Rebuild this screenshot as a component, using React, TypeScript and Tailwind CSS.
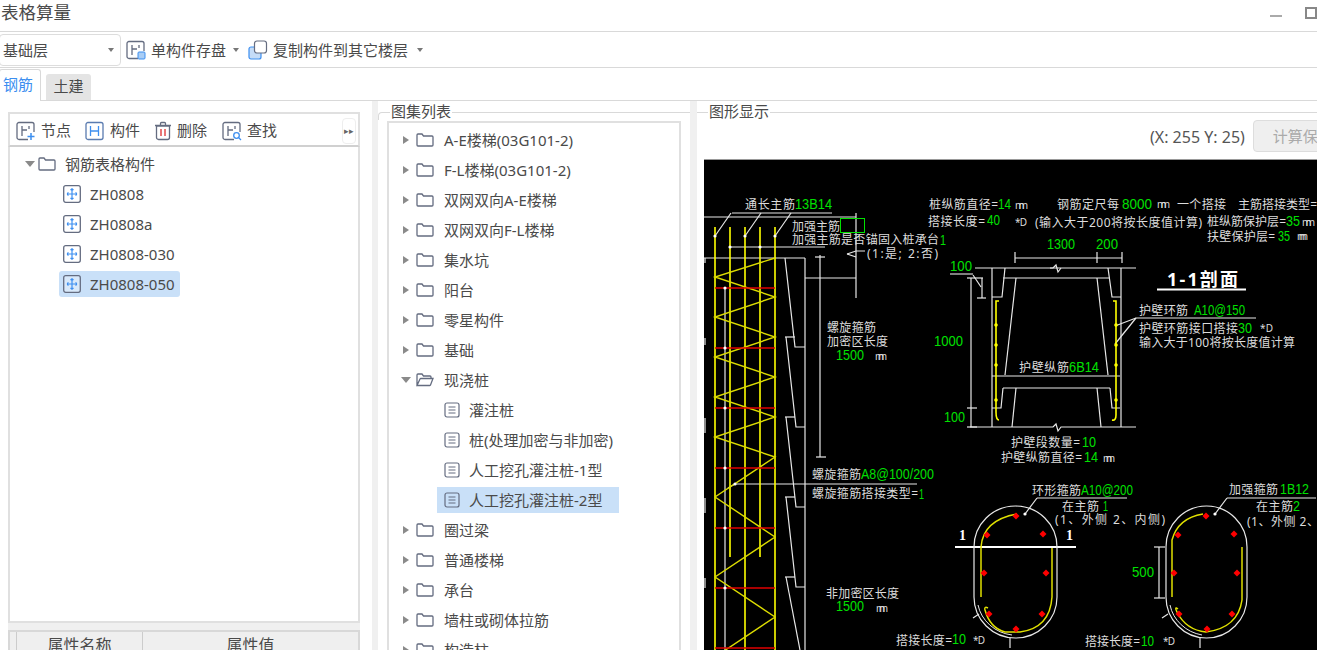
const CJK = "'Noto Sans', 'Noto Sans CJK SC', sans-serif"

const W = '#e8e8e8'
const G = '#00e000'
const Y = '#ffff00'

// x, y (middle), width, text
const whiteLabels: [number, number, number, string][] = [
  [745, 204, 50, '通长主筋'],
  [792, 226, 48, '加强主筋'],
  [792, 239, 147, '加强主筋是否锚固入桩承台'],
  [867, 253, 71, '(1:是; 2:否)'],
  [929, 204, 69, '桩纵筋直径='],
  [1015, 205, 13, 'mm'],
  [928, 221, 57, '搭接长度='],
  [1015, 222, 12, '*D'],
  [1035, 222, 167, '(输入大于200将按长度值计算)'],
  [1057, 204, 62, '钢筋定尺每'],
  [1157, 204, 13, 'mm'],
  [1177, 204, 49, '一个搭接'],
  [1238, 204, 79, '主筋搭接类型='],
  [1207, 221, 79, '桩纵筋保护层='],
  [1302, 222, 13, 'mm'],
  [1207, 236, 68, '扶壁保护层='],
  [1297, 236, 11, 'mm'],
  [827, 327, 49, '螺旋箍筋'],
  [827, 341, 61, '加密区长度'],
  [875, 356, 12, 'mm'],
  [1139, 310, 49, '护壁环筋'],
  [1139, 328, 99, '护壁环筋接口搭接'],
  [1260, 328, 13, '*D'],
  [1139, 342, 156, '输入大于100将按长度值计算'],
  [1019, 367, 50, '护壁纵筋'],
  [1011, 442, 69, '护壁段数量='],
  [1001, 457, 81, '护壁纵筋直径='],
  [1103, 458, 12, 'mm'],
  [812, 474, 49, '螺旋箍筋'],
  [812, 493, 106, '螺旋箍筋搭接类型='],
  [826, 593, 73, '非加密区长度'],
  [876, 608, 12, 'mm'],
  [896, 640, 56, '搭接长度='],
  [973, 640, 12, '*D'],
  [1032, 490, 49, '环形箍筋'],
  [1062, 506, 37, '在主筋'],
  [1055, 519, 110, '(1、外侧  2、内侧)'],
  [1229, 489, 49, '加强箍筋'],
  [1256, 506, 37, '在主筋'],
  [1247, 521, 72, '(1、外侧  2、'],
  [1085, 641, 55, '搭接长度='],
  [1163, 641, 12, '*D'],
]

const greenLabels: [number, number, number, string][] = [
  [795, 204, 37, '13B14'],
  [940, 240, 6, '1'],
  [998, 204, 13, '14'],
  [987, 220, 13, '40'],
  [1122, 204, 30, '8000'],
  [1286, 221, 14, '35'],
  [1278, 236, 12, '35'],
  [950, 266, 22, '100'],
  [1047, 244, 28, '1300'],
  [1096, 244, 22, '200'],
  [934, 341, 29, '1000'],
  [836, 355, 28, '1500'],
  [1194, 310, 51, 'A10@150'],
  [1238, 328, 14, '30'],
  [1069, 367, 30, '6B14'],
  [944, 417, 21, '100'],
  [1082, 442, 14, '10'],
  [1084, 457, 14, '14'],
  [861, 474, 73, 'A8@100/200'],
  [919, 494, 5, '1'],
  [1081, 490, 52, 'A10@200'],
  [1103, 506, 5, '1'],
  [1280, 489, 29, '1B12'],
  [1293, 506, 7, '2'],
  [1132, 572, 22, '500'],
  [836, 606, 28, '1500'],
  [952, 639, 14, '10'],
  [1141, 641, 13, '10'],
]

const whiteLines = [
  'M704 217H856', 'M732 213H832', 'M731 213L715 236', 'M761 213L745 236', 'M791 213L775 236',
  'M730 247H825', 'M704 258H805', 'M805 258V650', 'M725 287V650',
  'M785 258L795 347H805', 'M785 337H795', 'M786 337L796 427H805', 'M785 417H795',
  'M786 417L796 507H805', 'M785 497H795', 'M786 497L796 587H805', 'M785 577H795', 'M786 577L800 650',
  'M820 255V457', 'M815 257H825', 'M816 457H826', 'M805 278H856', 'M856 213V298',
  'M847 254L856 251H865', 'M847 254L856 257',
  'M705 258V263', 'M705 338V345', 'M705 418V433', 'M705 498V513', 'M705 578V588',
  // section
  'M975 268H1136', 'M992 268V427', 'M1121 268V427', 'M1005 268L1002 297H992', 'M1108 268L1112 297H1121',
  'M1003 278H1110', 'M1016 278L1005 375', 'M1097 278L1108 375', 'M992 376H1120', 'M1003 388H1110',
  'M1016 388L1012 427', 'M1097 388L1101 427', 'M1110 388L1112 408H1120', 'M1003 388L1001 408H992',
  'M970 427H1053L1056 424L1058 431L1061 427H1136', 'M971 278V427', 'M967 278H983', 'M982 278V298', 'M977 298H986',
  'M973 275L981 287', 'M967 408H977', 'M967 427H977',
  'M1015 258H1122', 'M1015 252V263', 'M1097 252V263', 'M1122 252V263',
  'M1050 268L1053 268L1056 265L1058 272L1061 268',
  // leaders
  'M1136 318H1256', 'M1136 318L1115 326', 'M1136 318L1115 344',
  'M735 484H917', 'M735 484L728 488',
  'M1037 498H1127', 'M1037 498L1025 514', 'M1227 498H1316', 'M1227 498L1215 514',
  'M1159 547V598', 'M1154 547H1165', 'M1154 598H1165',
  'M1010 638V648', 'M1200 638V648', 'M973 618L979 614', 'M1162 618L1168 614',
]

const yellowLines = [
  'M715 227V650', 'M730 227V557', 'M745 227V650', 'M760 227V557', 'M775 227V650',
  'M996 305V412Q996 420 999 420', 'M996 305V301H999', 'M1116 305V415Q1116 421 1112 420', 'M1116 305V301H1113',
]

const zigzag =
  'M775 258L715 277L775 297L715 317L775 337L715 357L775 377L715 397L775 417L715 437L775 457L715 497L775 537L715 577L775 617L715 657'

const redLines = [288, 348, 408, 468, 528, 588, 648]

const redDots = [
  [987, 535], [984, 573], [989, 614], [1016, 516], [1043, 534], [1046, 573], [1042, 614], [1016, 629],
  [1206, 516], [1234, 534], [1237, 573], [1232, 614], [1207, 629], [1179, 614], [1174, 573], [1178, 535],
]

const whiteDots = [
  [715, 236], [745, 236], [775, 236], [730, 247], [760, 247], [725, 288], [725, 348], [725, 408], [725, 468],
  [725, 528], [725, 588], [735, 484], [1025, 514], [1215, 514],
]

const rebarDots = [
  [996, 325], [996, 345], [996, 365], [996, 400], [1116, 325], [1116, 345], [1116, 365], [1116, 400],
]

const Drawing = () => (
  <svg viewBox="704 160 613 490" className="block w-[613px] h-[490px] bg-black">
    {whiteLines.map((d) => (
      <path key={d} d={d} fill="none" stroke={W} strokeWidth={1.2} />
    ))}
    {yellowLines.map((d) => (
      <path key={d} d={d} fill="none" stroke={Y} strokeWidth={1.6} />
    ))}
    <path d={zigzag} fill="none" stroke="#dcdc00" strokeWidth={1.4} />
    {redLines.map((y) => (
      <path key={y} d={`M715 ${y}H775`} stroke="#e00000" strokeWidth={1.6} />
    ))}
    <rect x={840.5} y={218.5} width={24} height={14} fill="none" stroke="#00e000" />
    <path d="M955 547H1076" stroke="#fff" strokeWidth={2} />
    <path d="M950 274H973" stroke="#fff" strokeWidth={1} />
    {/* ovals */}
    <path d="M974 547A41.5 41 0 0 1 1057 547V597A41.5 41 0 0 1 974 597Z" fill="none" stroke={W} strokeWidth={1.2} />
    <path d="M978 605A40 38 0 0 0 1012 635" fill="none" stroke={W} />
    <path d="M1166 547A40.5 41 0 0 1 1247 547V597A40.5 41 0 0 1 1166 597Z" fill="none" stroke={W} strokeWidth={1.2} />
    <path d="M1170 605A40 38 0 0 0 1202 635" fill="none" stroke={W} />
    <path d="M981 597V547Q983 520 1017 514" fill="none" stroke="#e0e000" strokeWidth={1.5} />
    <path d="M1052 548V597Q1050 628 1020 632H1005Q990 628 985 610Q984 606 988 608" fill="none" stroke="#e0e000" strokeWidth={1.5} />
    <path d="M1172 597V540Q1178 518 1203 514" fill="none" stroke="#e0e000" strokeWidth={1.5} />
    <path d="M1242 547V600Q1238 628 1206 632Q1186 630 1177 612Q1174 606 1178 609" fill="none" stroke="#e0e000" strokeWidth={1.5} />
    {redDots.map(([x, y]) => (
      <path key={`${x}-${y}`} d={`M${x} ${y - 3.5}L${x + 3.5} ${y}L${x} ${y + 3.5}L${x - 3.5} ${y}Z`} fill="#ff0000" />
    ))}
    {whiteDots.map(([x, y]) => (
      <circle key={`${x}-${y}`} cx={x} cy={y} r={1.6} fill="#fff" />
    ))}
    {rebarDots.map(([x, y]) => (
      <circle key={`${x}-${y}`} cx={x} cy={y} r={1.8} fill={Y} />
    ))}
    {whiteLabels.map(([x, y, w, t]) => (
      <text
        key={`${x}-${y}-${t}`}
        x={x}
        y={y}
        textLength={w}
        lengthAdjust="spacing"
        dominantBaseline="central"
        fontSize={t === 'mm' || t === '*D' ? 10 : 12}
        fontFamily={CJK}
        fill="#dcdcdc"
      >
        {t}
      </text>
    ))}
    {greenLabels.map(([x, y, w, t]) => (
      <text
        key={`${x}-${y}-${t}`}
        x={x}
        y={y}
        textLength={w}
        lengthAdjust="spacingAndGlyphs"
        dominantBaseline="central"
        fontSize={14}
        fontFamily="'Liberation Sans', sans-serif"
        fill={G}
      >
        {t}
      </text>
    ))}
    <text x={1167} y={279} textLength={71} lengthAdjust="spacing" dominantBaseline="central" fontSize={18} fontWeight={700} fontFamily={CJK} fill="#fff">
      1-1剖面
    </text>
    <path d="M1157 289.5H1246" stroke="#fff" strokeWidth={2} />
    <text x={959} y={535} dominantBaseline="central" fontSize={14} fontWeight={700} fontFamily="'Liberation Serif', serif" fill="#fff">1</text>
    <text x={1066} y={535} dominantBaseline="central" fontSize={14} fontWeight={700} fontFamily="'Liberation Serif', serif" fill="#fff">1</text>
  </svg>
)

const stroke = '#646c80'

const FolderIcon = (props: { open?: boolean }) => (
  <svg width="20" height="18" viewBox="0 0 20 18" fill="none" stroke={stroke} strokeWidth="1.3">
    {props.open ? (
      <path d="M2 14V4a1 1 0 0 1 1-1h4l1.5 2H15a1 1 0 0 1 1 1v1.5M2 14.5 5 8a1 1 0 0 1 1-.5h12L15.500 14a1 1 0 0 1-1 .5Z" />
    ) : (
      <path d="M2 4a1 1 0 0 1 1-1h4l1.500 2H17a1 1 0 0 1 1 1v8a1 1 0 0 1-1 1H3a1 1 0 0 1-1-1Z" />
    )}
  </svg>
)

const DocIcon = () => (
  <svg width="16" height="16" viewBox="0 0 16 16" fill="none" stroke={stroke} strokeWidth="1.2">
    <rect x="1" y="1" width="14" height="14" rx="2" />
    <path d="M4.500 5h7M4.500 8h7M4.500 11h7" />
  </svg>
)

const PartIcon = () => (
  <svg width="18" height="18" viewBox="0 0 18 18" fill="none">
    <rect x="0.700" y="0.700" width="16.600" height="16.600" rx="2" stroke={stroke} strokeWidth="1.300" fill="#fff" fillOpacity="0.300" />
    <path d="M9 4v10M4.500 9h9M7.500 5 9 3.800 10.500 5M5.500 7.500c-1.500.5-1.500 2.500 0 3M12.500 7.500c1.500.5 1.500 2.500 0 3M7.500 13 9 14.200 10.500 13" stroke="#3d8ff0" strokeWidth="1.200" />
  </svg>
)

const BarIcon = (props: { kind: 'node' | 'part' | 'search' | 'save' }) => (
  <svg width="20" height="20" viewBox="0 0 20 20" fill="none">
    {props.kind === 'part' ? (
      <>
        <rect x="1" y="1.500" width="17" height="17" rx="2" stroke="#5a7bb0" strokeWidth="1.300" />
        <path d="M5.500 5v10M13.500 5v10M5.500 10h8" stroke="#3d8ff0" strokeWidth="1.300" />
      </>
    ) : (
      <>
        <path d="M12 18.500H3a2 2 0 0 1-2-2v-13a2 2 0 0 1 2-2h13a2 2 0 0 1 2 2V11" stroke={stroke} strokeWidth="1.300" />
        <path d="M6 5v10M13 5v3M6 9h5" stroke={stroke} strokeWidth="1.300" />
        {props.kind === 'node' && <path d="M15 12v7M11.500 15.500h7" stroke="#3d8ff0" strokeWidth="1.500" />}
        {props.kind === 'search' && (
          <>
            <circle cx="14.500" cy="14.500" r="2.800" stroke="#3d8ff0" strokeWidth="1.300" />
            <path d="m16.500 16.500 2.500 2.500" stroke="#3d8ff0" strokeWidth="1.300" />
          </>
        )}
        {props.kind === 'save' && <rect x="12" y="12" width="7" height="7" rx="1" fill="#a9cdf5" stroke="#3d8ff0" />}
      </>
    )}
  </svg>
)

const TrashIcon = () => (
  <svg width="18" height="20" viewBox="0 0 18 20" fill="none">
    <path d="M2.500 5h13v11.500a2 2 0 0 1-2 2h-9a2 2 0 0 1-2-2ZM1 4.500h16M6.500 4.500v-2a1 1 0 0 1 1-1h3a1 1 0 0 1 1 1v2" stroke={stroke} strokeWidth="1.300" />
    <path d="M7 8v7M11 8v7" stroke="#e34b4b" strokeWidth="1.500" />
  </svg>
)

const CopyIcon = () => (
  <svg width="20" height="20" viewBox="0 0 20 20" fill="none">
    <rect x="1" y="7" width="12" height="12" rx="2" fill="#c5dcf7" stroke="#3d8ff0" strokeWidth="1.200" />
    <rect x="6.500" y="1" width="12" height="12" rx="2.500" fill="#fff" stroke={stroke} strokeWidth="1.200" />
  </svg>
)

const Caret = (props: { className?: string }) => (
  <span className={`block shrink-0 w-0 h-0 border-x-[3px] border-x-transparent border-t-[4px] border-t-[#777] ${props.className ?? ''}`} />
)
const ArrowRight = () => <span className="block w-0 h-0 border-y-[4px] border-y-transparent border-l-[6px] border-l-[#8a8a8a]" />
const ArrowDown = () => <span className="block w-0 h-0 border-x-[5px] border-x-transparent border-t-[6px] border-t-[#8a8a8a]" />

const folders = [
  'A-E楼梯(03G101-2)',
  'F-L楼梯(03G101-2)',
  '双网双向A-E楼梯',
  '双网双向F-L楼梯',
  '集水坑',
  '阳台',
  '零星构件',
  '基础',
]
const piles = ['灌注桩', '桩(处理加密与非加密)', '人工挖孔灌注桩-1型', '人工挖孔灌注桩-2型']
const moreFolders = ['圈过梁', '普通楼梯', '承台', '墙柱或砌体拉筋', '构造柱']
const parts = ['ZH0808', 'ZH0808a', 'ZH0808-030', 'ZH0808-050']

const FolderRow = (props: { label: string; open?: boolean }) => (
  <div className="h-[30px] flex items-center shrink-0">
    <span className="w-[13px] ml-[10px] flex justify-center">{props.open ? <ArrowDown /> : <ArrowRight />}</span>
    <span className="ml-[3px]">
      <FolderIcon open={props.open} />
    </span>
    <span className="ml-[9px] whitespace-nowrap">{props.label}</span>
  </div>
)

const ToolItem = (props: { icon: React.ReactNode; label: string; width: string }) => (
  <div className={`flex items-center gap-[5px] ${props.width}`}>
    {props.icon}
    <span>{props.label}</span>
  </div>
)

export default function App() {
  return (
    <div
      className="w-[1317px] h-[650px] overflow-hidden bg-white flex flex-col text-[15px] text-[#4a4a4a]"
      style={{ fontFamily: CJK }}
    >
      <div className="h-[31px] shrink-0 flex items-center justify-between pl-[1px] pb-[6px]">
        <span className="text-[17.500px] leading-none">表格算量</span>
        <div className="flex items-center gap-[23px]">
          <span className="w-[12px] h-[2px] bg-[#aaaaaa] mt-[6px]" />
          <span className="w-[12px] h-[12px] border-2 border-[#888888]" />
        </div>
      </div>

      <div className="h-[37px] shrink-0 border-y border-[#d9d9d9] flex items-center pt-[1px]">
        <div className="w-[122px] h-[32px] ml-[-1px] border border-[#dddddd] rounded-[4px] flex items-center justify-between pl-[3px] pr-[6px]">
          <span>基础层</span>
          <Caret />
        </div>
        <span className="ml-[5px]">
          <BarIcon kind="save" />
        </span>
        <span className="ml-[5px]">单构件存盘</span>
        <Caret className="ml-[7px]" />
        <span className="ml-[9px]">
          <CopyIcon />
        </span>
        <span className="ml-[5px]">复制构件到其它楼层</span>
        <Caret className="ml-[9px]" />
      </div>

      <div className="h-[33px] shrink-0 border-b border-[#d9d9d9] flex items-end">
        <div className="w-[42px] h-[32px] border border-b-0 border-[#d9d9d9] rounded-t-[3px] bg-white text-[#3b8ef0] flex items-center justify-center mb-[-1px] ml-[-1px] pb-[2px] pr-[4px]">
          钢筋
        </div>
        <div className="w-[45px] h-[26px] ml-[5px] bg-[#e4e4e4] rounded-t-[3px] flex items-center justify-center pb-[1px]">土建</div>
      </div>

      <div className="flex-1 min-h-0 flex">
        <div className="w-[372px] shrink-0 pl-[8px] pr-[12px] pt-[11px] flex flex-col">
          <div className="h-[35px] shrink-0 border-2 border-[#e0e0e0] border-b-[#d0d0d0] flex items-center pl-[6px] pr-[2px] pt-[2px]">
            <ToolItem icon={<BarIcon kind="node" />} label="节点" width="w-[69px]" />
            <ToolItem icon={<BarIcon kind="part" />} label="构件" width="w-[69px]" />
            <ToolItem icon={<TrashIcon />} label="删除" width="w-[68px]" />
            <ToolItem icon={<BarIcon kind="search" />} label="查找" width="w-[120px]" />
            <div className="h-[26px] w-[14px] border border-[#eeeeee] rounded-[4px] text-[9px] text-[#666] flex items-center justify-center">▸▸</div>
          </div>
          <div className="h-[476px] shrink-0 border-2 border-t-0 border-[#e0e0e0]">
            <div className="h-[30px] mt-[2px] flex items-center">
              <span className="ml-[14px] w-[12px] flex justify-center">
                <ArrowDown />
              </span>
              <span className="ml-[1px]">
                <FolderIcon />
              </span>
              <span className="ml-[8px]">钢筋表格构件</span>
            </div>
            {parts.map((p, i) => (
              <div key={p} className="h-[30px] flex items-center">
                <div
                  className={`h-[26px] ml-[49px] pl-[4px] pr-[5px] rounded-[3px] flex items-center gap-[9px] ${i === 3 ? 'bg-[#c9e0f8]' : ''}`}
                >
                  <PartIcon />
                  <span>{p}</span>
                </div>
              </div>
            ))}
          </div>
          <div className="h-[7px] shrink-0 bg-[#f0f0f0]" />
          <div className="h-[30px] shrink-0 flex bg-[#efefef] border-t-2 border-x-2 border-[#d8d8d8] text-[16px] leading-[26px]">
            <div className="w-[7px] border-r border-[#cccccc]" />
            <div className="w-[126px] border-r border-[#cccccc] text-center">属性名称</div>
            <div className="flex-1 text-center">属性值</div>
          </div>
        </div>

        <div className="w-[6px] shrink-0 bg-[#f0f0f0]" />

        <div className="w-[312px] shrink-0 relative pt-[11px] pl-[9px] pr-[9px]">
          <div className="absolute left-0 right-0 top-[11px] h-[8px] border-t border-l border-[#d9d9d9] rounded-tl-[4px]" />
          <span className="absolute left-[12px] top-[1px] bg-white px-[1px] leading-[18px]">图集列表</span>
          <div className="h-[600px] mt-[9px] border-x-2 border-t-2 border-[#e0e0e0] pt-[2px] overflow-hidden">
            {folders.map((f) => (
              <FolderRow key={f} label={f} />
            ))}
            <FolderRow label="现浇桩" open />
            {piles.map((p, i) => (
              <div key={p} className="h-[30px] flex items-center">
                <div className={`h-[26px] ml-[48px] w-[182px] pl-[7px] flex items-center gap-[9px] ${i === 3 ? 'bg-[#c9e0f8]' : ''}`}>
                  <DocIcon />
                  <span className="whitespace-nowrap">{p}</span>
                </div>
              </div>
            ))}
            {moreFolders.map((f) => (
              <FolderRow key={f} label={f} />
            ))}
          </div>
        </div>

        <div className="w-[7px] shrink-0 bg-[#f0f0f0]" />

        <div className="flex-1 min-w-0 relative pl-[7px] flex flex-col">
          <div className="absolute left-0 right-0 top-[11px] border-t border-[#d9d9d9]" />
          <span className="absolute left-[11px] top-[1px] bg-white px-[1px] leading-[18px]">图形显示</span>
          <div className="h-[59px] shrink-0 border-b border-[#999999] flex items-start overflow-hidden pl-[446px] pt-[19px]">
            <span className="whitespace-nowrap mt-[5px] text-[16px] text-[#555]">(X: 255 Y: 25)</span>
            <div className="ml-[8px] w-[90px] h-[32px] shrink-0 border border-[#dddddd] rounded-[4px] bg-[#efefef] text-[#aaaaaa] flex items-center pl-[19px] whitespace-nowrap">
              计算保存
            </div>
          </div>
          <Drawing />
        </div>
      </div>
    </div>
  )
}
